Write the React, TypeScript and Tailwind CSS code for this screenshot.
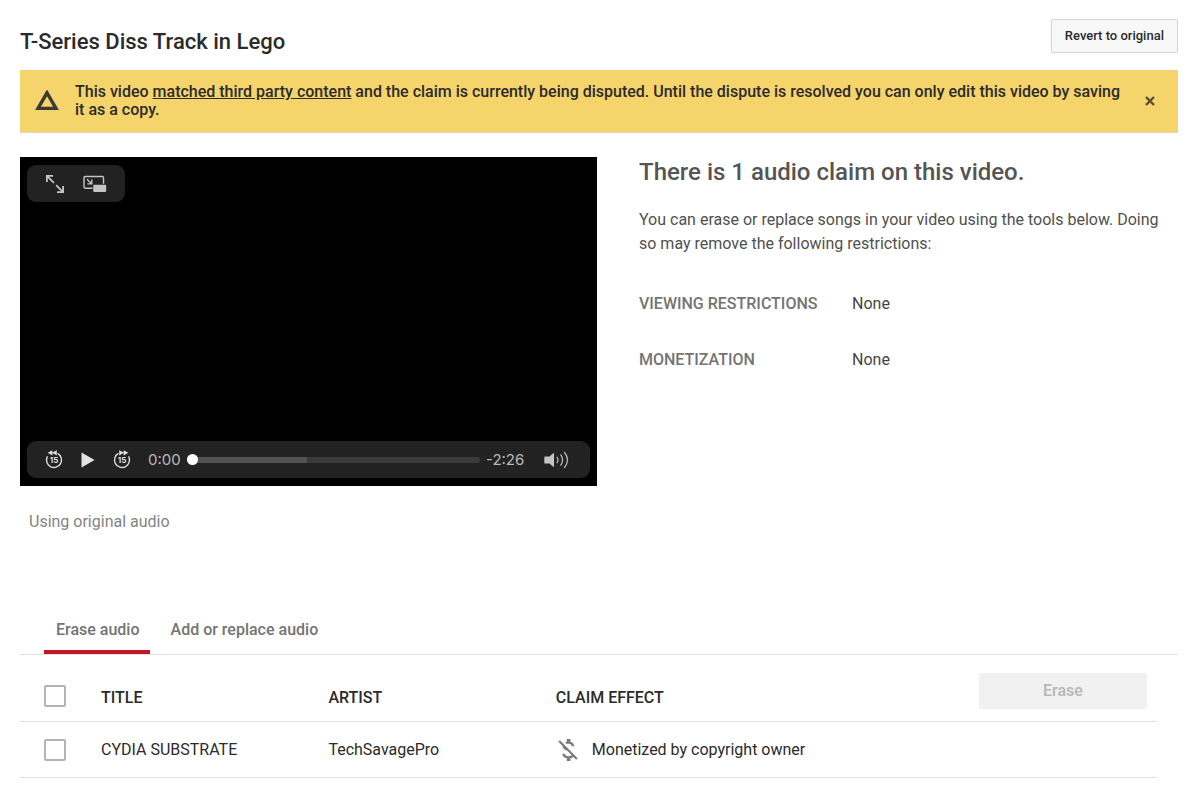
import { useState } from "react";

type Claim = {
  id: number;
  title: string;
  artist: string;
  effect: string;
};

const claims: Claim[] = [
  {
    id: 1,
    title: "CYDIA SUBSTRATE",
    artist: "TechSavagePro",
    effect: "Monetized by copyright owner",
  },
];

const restrictions = [
  { label: "VIEWING RESTRICTIONS", value: "None" },
  { label: "MONETIZATION", value: "None" },
];

const tabs = ["Erase audio", "Add or replace audio"];

const WarningIcon = () => (
  <svg viewBox="0 0 24 22" className="h-[22px] w-6 shrink-0" aria-hidden="true">
    <path d="M12 2.8 21 18.4H3z" fill="none" stroke="#3b3a36" strokeWidth="3.4" />
  </svg>
);

const CloseIcon = () => (
  <svg viewBox="0 0 10 10" className="h-2.5 w-2.5" aria-hidden="true">
    <path d="M1 1l8 8M9 1L1 9" stroke="#55502f" strokeWidth="2.4" />
  </svg>
);

const FullscreenIcon = () => (
  <svg
    viewBox="0 0 20 20"
    className="h-5 w-5"
    fill="none"
    stroke="#c4c4c4"
    strokeWidth="1.8"
    aria-hidden="true"
  >
    <path d="M8 1.9H1.9V8M1.9 1.9l7 7M12 18.1h6.1V12M18.1 18.1l-7-7" />
  </svg>
);

const PictureInPictureIcon = () => (
  <svg viewBox="0 0 24 18" className="h-[18px] w-6" aria-hidden="true">
    <path
      d="M9.5 13.2H2.2a1.2 1.2 0 0 1-1.2-1.2V2.7a1.2 1.2 0 0 1 1.2-1.2h17.1a1.2 1.2 0 0 1 1.2 1.2v6"
      fill="none"
      stroke="#c4c4c4"
      strokeWidth="1.4"
    />
    <path
      d="M4 4.2l4.6 4.6M8.8 4.6v4.3H4.4"
      fill="none"
      stroke="#c4c4c4"
      strokeWidth="1.4"
    />
    <rect x="10.2" y="9.8" width="13" height="7.2" rx="1.2" fill="#c4c4c4" />
  </svg>
);

const SkipIcon = ({ forward = false }: { forward?: boolean }) => (
  <svg viewBox="0 0 18 20" className="h-5 w-[18px]" aria-hidden="true">
    <g transform={forward ? "translate(18 0) scale(-1 1)" : undefined}>
      <path
        d="M12.6 3.4a7.5 7.5 0 1 1-10.2 3"
        fill="none"
        stroke="#dedede"
        strokeWidth="1.4"
      />
      <path d="M2.6 2.8 7.4.2v5.2zM7 2.8 11.8.2v5.2z" fill="#dedede" />
    </g>
    <text
      x="9"
      y="13"
      textAnchor="middle"
      fill="#dedede"
      fontSize="8"
      fontWeight="700"
      fontFamily="Inter, sans-serif"
    >
      15
    </text>
  </svg>
);

const PlayIcon = () => (
  <svg viewBox="0 0 14 16" className="h-4 w-3.5" aria-hidden="true">
    <path d="M.5.4 13.6 8 .5 15.6z" fill="#e4e4e4" />
  </svg>
);

const VolumeIcon = () => (
  <svg viewBox="0 0 26 18" className="h-[18px] w-[26px]" aria-hidden="true">
    <path
      d="M1.2 5.4h4.2L10 1.7v14.6l-4.6-3.7H1.2a.9.9 0 0 1-.9-.9V6.3a.9.9 0 0 1 .9-.9z"
      fill="#c4c4c4"
    />
    <path
      d="M12.8 5.8q2.4 3.2 0 6.4M16.5 3.4q4.2 5.6 0 11.2M20.2 1q6.6 8 0 16"
      fill="none"
      stroke="#b4b4b4"
      strokeWidth="1.3"
    />
  </svg>
);

const MoneyOffIcon = () => (
  <svg viewBox="4 3 16 18" className="h-[22px] w-5 shrink-0" aria-hidden="true">
    <path
      fill="#7b7b7b"
      d="M12.5 6.9c1.78 0 2.44.85 2.5 2.1h2.21c-.07-1.72-1.12-3.3-3.21-3.81V3h-3v2.16c-.53.12-1.03.3-1.48.54l1.47 1.47c.41-.17.91-.27 1.51-.27zM5.33 4.06L4.06 5.33 7.5 8.77c0 2.08 1.56 3.21 3.91 3.91l3.51 3.51c-.34.48-1.05.91-2.42.91-2.06 0-2.87-.92-2.98-2.1h-2.2c.12 2.19 1.76 3.42 3.68 3.83V21h3v-2.15c.96-.18 1.82-.55 2.45-1.12l2.22 2.22 1.27-1.27L5.33 4.06z"
    />
  </svg>
);

const Checkbox = ({
  label,
  checked,
  onChange,
}: {
  label: string;
  checked: boolean;
  onChange: () => void;
}) => (
  <input
    type="checkbox"
    aria-label={label}
    checked={checked}
    onChange={onChange}
    className="block h-[22px] w-[22px] appearance-none rounded-[2px] border-2 border-[#b3b3b3] bg-white checked:bg-[#b3b3b3]"
  />
);

const VideoPlayer = () => {
  const [position, setPosition] = useState(0);

  return (
    <div className="flex aspect-[577/329] flex-col justify-between bg-black px-[7px] py-2">
      <div className="flex h-[37px] w-[98px] items-center justify-center gap-[18px] rounded-[9px] bg-[#222]">
        <button aria-label="Full screen">
          <FullscreenIcon />
        </button>
        <button aria-label="Picture in picture">
          <PictureInPictureIcon />
        </button>
      </div>
      <div className="flex h-[37px] items-center rounded-[9px] bg-[#222] pr-5 pl-[18px] font-[Inter,sans-serif] text-[15px] text-[#b9b9b9]">
        <div className="flex items-center gap-[18px]">
          <button aria-label="Back 15 seconds">
            <SkipIcon />
          </button>
          <button aria-label="Play">
            <PlayIcon />
          </button>
          <button aria-label="Forward 15 seconds">
            <SkipIcon forward />
          </button>
        </div>
        <span className="ml-[17px] w-[39px] shrink-0 pt-0.5">0:00</span>
        <input
          type="range"
          aria-label="Seek"
          min={0}
          max={146}
          value={position}
          onChange={(e) => setPosition(Number(e.target.value))}
          className="h-1.5 min-w-0 flex-1 appearance-none rounded-full bg-[linear-gradient(to_right,#525252_41%,#3a3a3a_41%)] [&::-webkit-slider-thumb]:h-[11px] [&::-webkit-slider-thumb]:w-[11px] [&::-webkit-slider-thumb]:appearance-none [&::-webkit-slider-thumb]:rounded-full [&::-webkit-slider-thumb]:bg-white"
        />
        <span className="ml-1.5 w-[58px] shrink-0 pt-0.5">-2:26</span>
        <button aria-label="Volume">
          <VolumeIcon />
        </button>
      </div>
    </div>
  );
};

const ClaimsTable = () => {
  const [selected, setSelected] = useState<number[]>([]);
  const allSelected = selected.length === claims.length;

  const toggle = (id: number) =>
    setSelected((prev) =>
      prev.includes(id) ? prev.filter((x) => x !== id) : [...prev, id]
    );

  return (
    <div className="pr-[21px]">
      <table className="w-full table-fixed border-collapse text-left text-base text-[#2b2b2b]">
        <colgroup>
          <col className="w-[81px]" />
          <col className="w-1/5" />
          <col className="w-1/5" />
          <col />
          <col className="w-[178px]" />
        </colgroup>
        <thead>
          <tr className="border-b border-[#dedede] align-bottom">
            <th className="pb-3.5 pl-6">
              <Checkbox
                label="Select all claims"
                checked={allSelected}
                onChange={() => setSelected(allSelected ? [] : claims.map((c) => c.id))}
              />
            </th>
            <th className="pb-[11px] font-medium">TITLE</th>
            <th className="pb-[11px] font-medium">ARTIST</th>
            <th className="pb-[11px] font-medium">CLAIM EFFECT</th>
            <th className="pt-[18px] pr-2.5 pb-3">
              <button
                disabled={selected.length === 0}
                className="block h-9 w-full rounded-[2px] bg-[#f1f1f1] font-medium text-[#2b2b2b] disabled:text-[#b7b7b7]"
              >
                Erase
              </button>
            </th>
          </tr>
        </thead>
        <tbody>
          {claims.map((claim) => (
            <tr key={claim.id} className="h-14 border-b border-[#dedede]">
              <td className="pl-6">
                <Checkbox
                  label={`Select ${claim.title}`}
                  checked={selected.includes(claim.id)}
                  onChange={() => toggle(claim.id)}
                />
              </td>
              <td>{claim.title}</td>
              <td>{claim.artist}</td>
              <td colSpan={2}>
                <div className="flex items-center gap-3.5 pl-0.5">
                  <MoneyOffIcon />
                  {claim.effect}
                </div>
              </td>
            </tr>
          ))}
        </tbody>
      </table>
    </div>
  );
};

export default function App() {
  const [activeTab, setActiveTab] = useState(tabs[0]);
  const [showBanner, setShowBanner] = useState(true);

  return (
    <main className="min-h-screen bg-white pt-[19px] pr-[22px] pb-6 pl-5 font-[Roboto,sans-serif] text-[#2b2b2b]">
      <header className="flex items-start justify-between">
        <h1 className="pt-2 text-[22px] leading-[30px] font-medium">
          T-Series Diss Track in Lego
        </h1>
        <button className="h-[34px] rounded-[2px] border border-[#d3d3d3] bg-[#f8f8f8] px-[13px] text-[13px] font-medium">
          Revert to original
        </button>
      </header>

      {showBanner && (
        <div className="mt-[13px] flex items-center border-b border-[#e4d9b5] bg-[#f5d46c] py-[13px] pr-[23px] pl-[15px]">
          <WarningIcon />
          <p className="ml-4 flex-1 pr-4 text-base leading-[18px] font-medium">
            This video{" "}
            <a href="#claims" className="underline">
              matched third party content
            </a>{" "}
            and the claim is currently being disputed. Until the dispute is resolved you can only
            edit this video by saving it as a copy.
          </p>
          <button aria-label="Dismiss" onClick={() => setShowBanner(false)}>
            <CloseIcon />
          </button>
        </div>
      )}

      <section className="mt-6 grid grid-cols-[577fr_539fr] gap-[42px]">
        <div>
          <VideoPlayer />
          <p className="mt-6 pl-[9px] text-base text-[#848484]">Using original audio</p>
        </div>
        <div>
          <h2 className="text-2xl leading-[30px] font-medium text-[#555]">
            There is 1 audio claim on this video.
          </h2>
          <p className="mt-[21px] text-base text-[#505050]">
            You can erase or replace songs in your video using the tools below. Doing so may remove
            the following restrictions:
          </p>
          <dl className="mt-9 grid grid-cols-[213px_1fr] gap-y-8 text-base">
            {restrictions.map((item) => (
              <div key={item.label} className="contents">
                <dt className="font-medium text-[#747474]">{item.label}</dt>
                <dd className="text-[#444]">{item.value}</dd>
              </div>
            ))}
          </dl>
        </div>
      </section>

      <section id="claims" className="mt-[71px]">
        <div role="tablist" className="flex gap-[9px] border-b border-[#dedede] pl-6">
          {tabs.map((tab) => (
            <button
              key={tab}
              role="tab"
              aria-selected={tab === activeTab}
              onClick={() => setActiveTab(tab)}
              className="h-[49px] border-b-4 border-transparent pt-1 pr-2.5 pl-3 text-base font-medium text-[#747474] aria-selected:border-[#c4162a]"
            >
              {tab}
            </button>
          ))}
        </div>
        <ClaimsTable />
      </section>
    </main>
  );
}
